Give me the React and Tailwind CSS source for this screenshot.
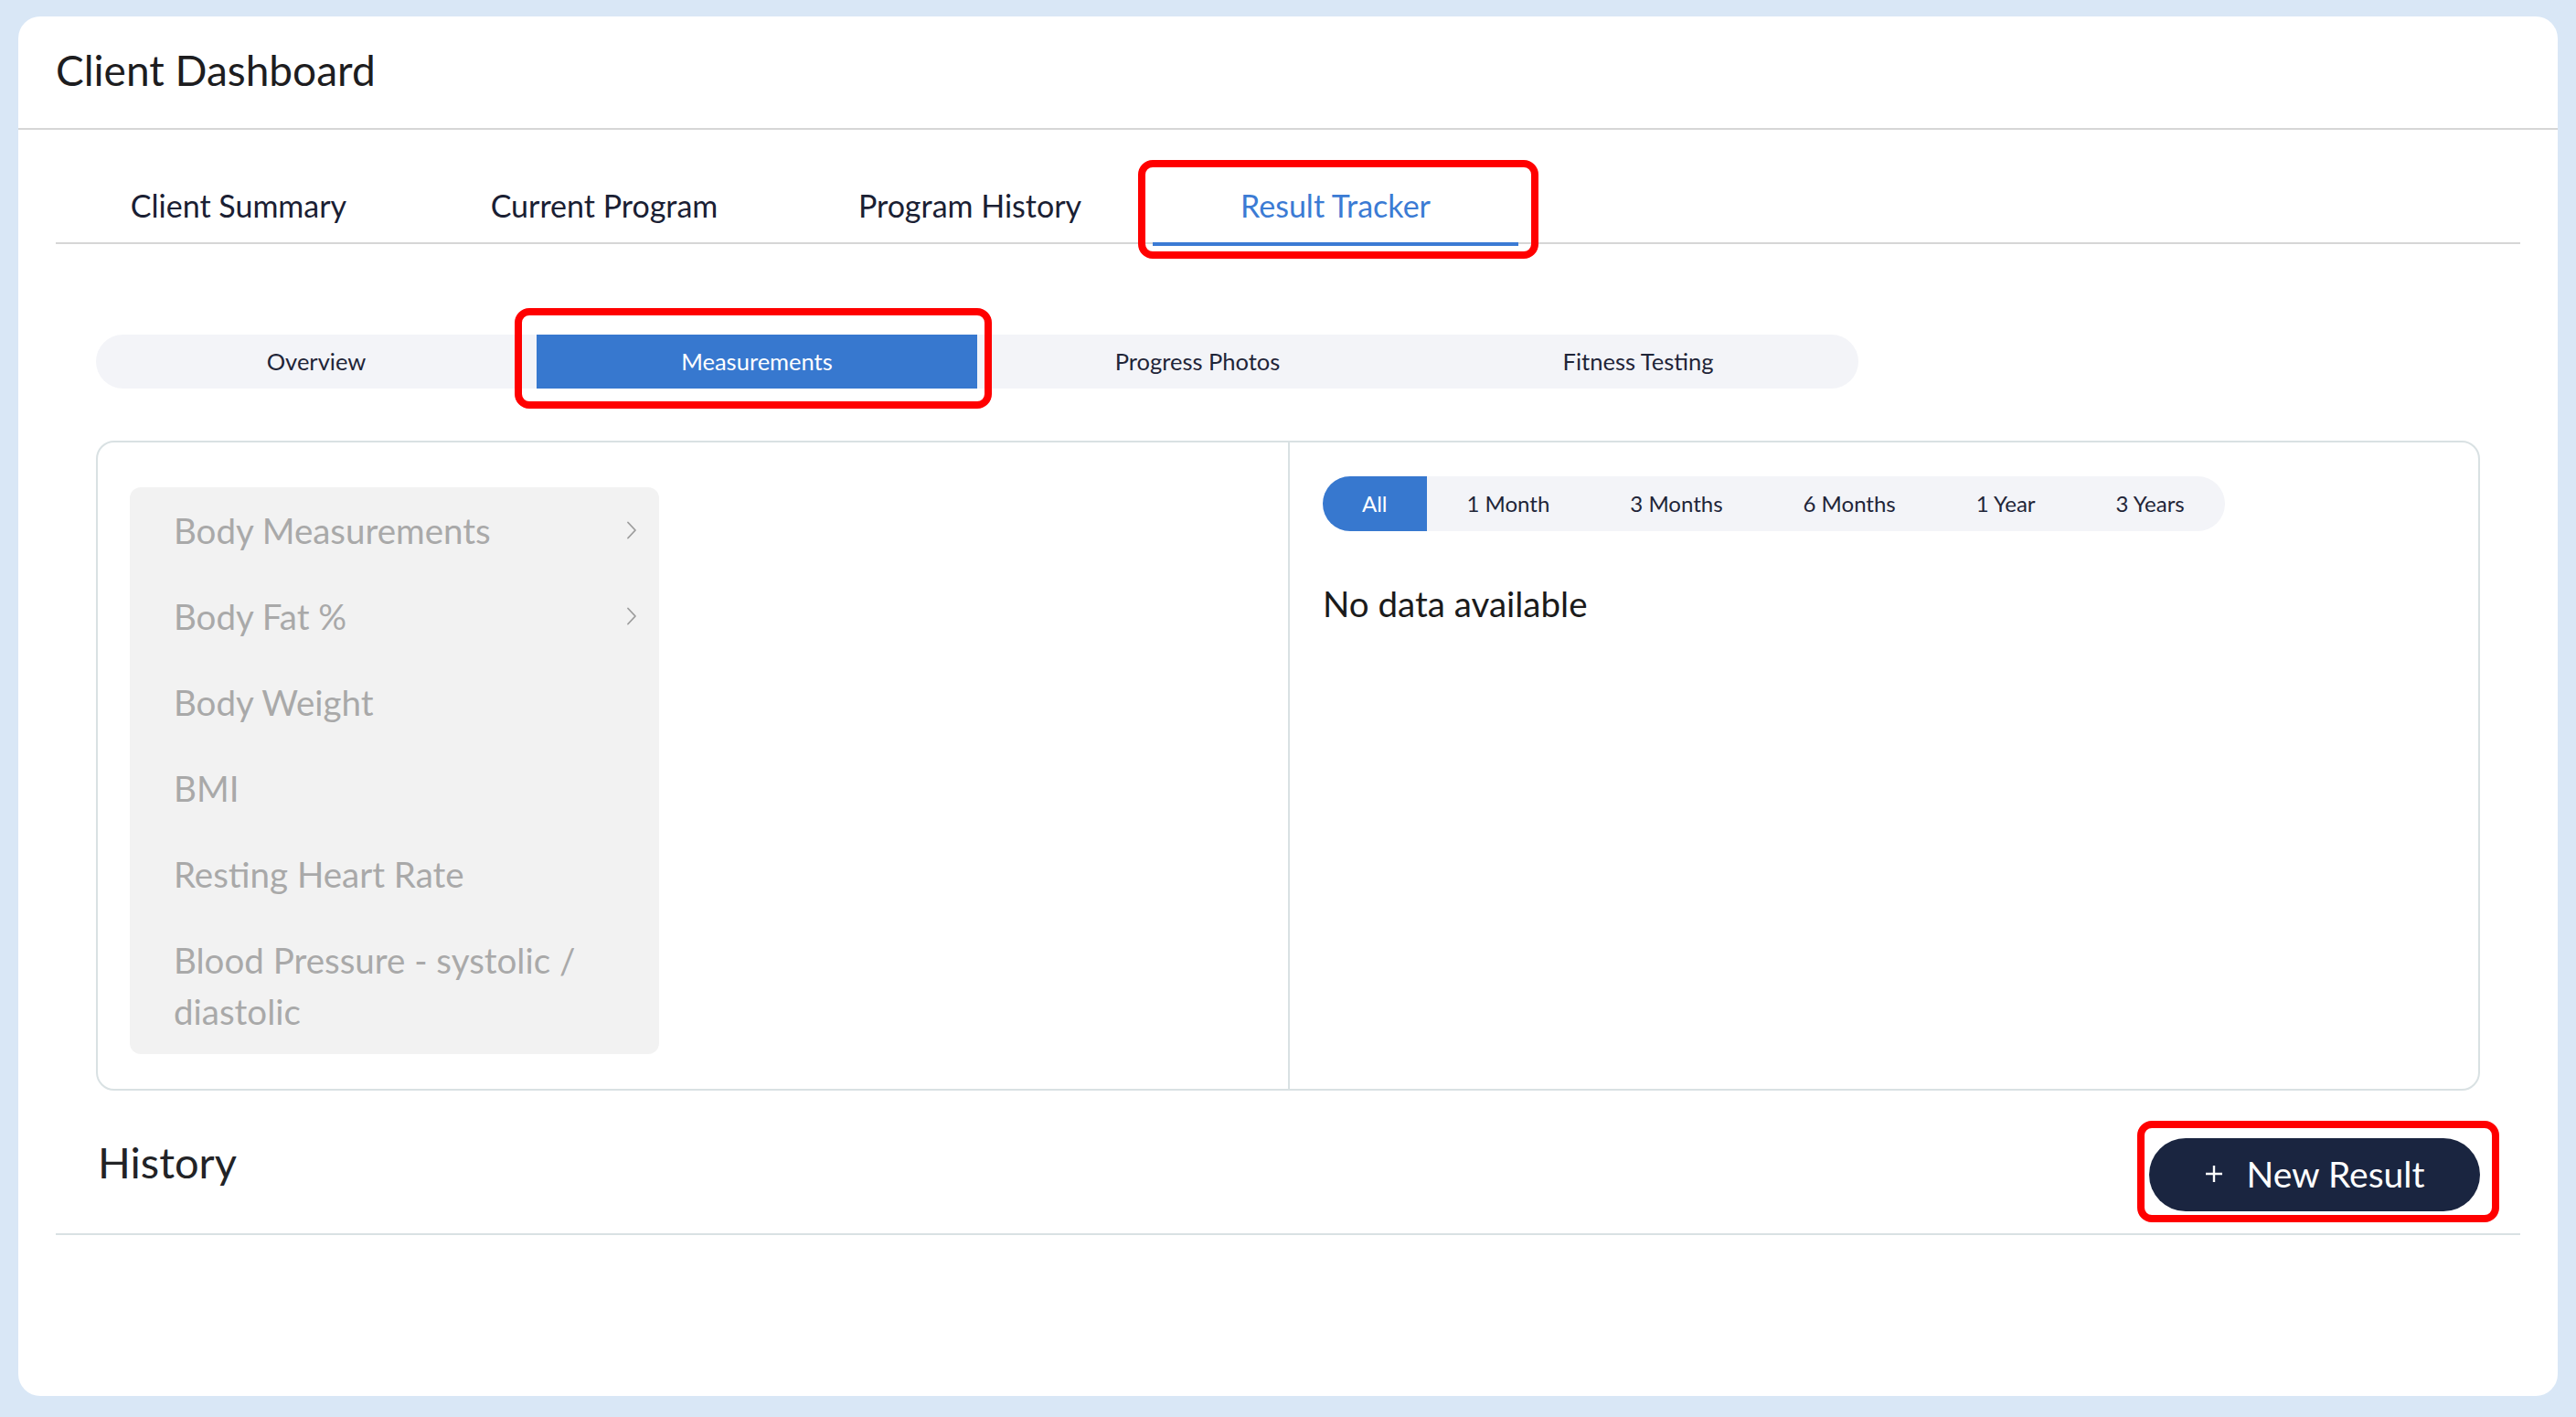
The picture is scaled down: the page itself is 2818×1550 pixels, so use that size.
import React from 'react';

const mainTabs = ['Client Summary', 'Current Program', 'Program History', 'Result Tracker'];
const subTabs = ['Overview', 'Measurements', 'Progress Photos', 'Fitness Testing'];
const ranges = ['All', '1 Month', '3 Months', '6 Months', '1 Year', '3 Years'];
const metrics = [
  { label: 'Body Measurements', nested: true },
  { label: 'Body Fat %', nested: true },
  { label: 'Body Weight' },
  { label: 'BMI' },
  { label: 'Resting Heart Rate' },
  { label: 'Blood Pressure - systolic / diastolic' },
];

// red callout frame drawn over a control
function Callout({ className }) {
  return (
    <span
      className={`pointer-events-none absolute rounded-[16px] border-[8px] border-[#ff0000] ${className}`}
    />
  );
}

function Chevron() {
  return (
    <svg width="12" height="20" viewBox="0 0 12 20" fill="none" className="shrink-0">
      <path d="M2 1.5l8 8.5-8 8.5" stroke="#9c9c9c" strokeWidth="1.8" strokeLinecap="round" strokeLinejoin="round" />
    </svg>
  );
}

function PlusIcon() {
  return (
    <svg width="20" height="20" viewBox="0 0 20 20" fill="none">
      <path d="M10 1v18M1 10h18" stroke="white" strokeWidth="2.4" />
    </svg>
  );
}

export default function App() {
  const activeTab = 'Result Tracker';
  const activeSub = 'Measurements';
  const activeRange = 'All';

  return (
    <div className="min-h-screen bg-[#d9e7f6] px-[20px] pt-[18px] pb-[23px] font-['Lato',sans-serif]">
      <div className="h-[1509px] rounded-[24px] bg-white">
        <header className="flex h-[124px] items-center border-b-2 border-[#d6d6d6] px-[41px] pb-[6px]">
          <h1 className="text-[46px] text-[#1d1d1f]">Client Dashboard</h1>
        </header>

        <div className="px-[41px]">
          <nav className="mt-[43px] flex border-b-2 border-[#d6d6d6]">
            {mainTabs.map((tab) => {
              const active = tab === activeTab;
              return (
                <button
                  key={tab}
                  className={
                    active
                      ? 'relative -mb-[4px] flex h-[84px] w-[400px] items-center justify-center border-b-4 border-[#3b7bd4] pb-[2px] text-[34px] text-[#3b7bd4]'
                      : 'relative -mb-[4px] flex h-[84px] w-[400px] items-center justify-center border-b-4 border-transparent pb-[2px] text-[34px] text-[#1a2033]'
                  }
                >
                  {tab}
                  {active && <Callout className="-left-[16px] -right-[22px] -top-[10px] -bottom-[18px]" />}
                </button>
              );
            })}
          </nav>

          <div className="px-[44px]">
            <div className="mt-[99px] flex h-[59px] w-[1928px] overflow-hidden rounded-full bg-[#f3f4f8]">
              {subTabs.map((tab) =>
                tab === activeSub ? (
                  <div key={tab} className="relative flex w-[482px] items-center justify-center bg-[#3778cf] text-[25.5px] text-white">
                    {tab}
                  </div>
                ) : (
                  <div key={tab} className="flex w-[482px] items-center justify-center text-[25.5px] text-[#1f2538]">
                    {tab}
                  </div>
                ),
              )}
            </div>
          </div>
        </div>

        <div className="relative px-[85px]">
          {/* callout around the active sub tab sits outside the clipped pill */}
          <Callout className="left-[543px] w-[522px] -top-[145px] h-[110px]" />

          <section className="mt-[57px] flex rounded-[20px] border-2 border-[#d9e1e3]">
            <div className="w-[1304px] border-r-2 border-[#d9e1e3] pt-[49px] pb-[38px] pl-[35px]">
              <ul className="w-[579px] rounded-[12px] bg-[#f2f2f2]">
                {metrics.map((m) => (
                  <li key={m.label} className="flex items-center gap-[12px] py-[19px] pr-[24px] pl-[48px]">
                    <span className="flex-1 text-[38.5px] leading-[56px] text-[#a9a9a9]">{m.label}</span>
                    {m.nested ? <Chevron /> : <span className="w-[12px]" />}
                  </li>
                ))}
              </ul>
            </div>

            <div className="flex-1 pt-[37px] pl-[36px]">
              <div className="inline-flex h-[60px] overflow-hidden rounded-full bg-[#f3f4f8]">
                {ranges.map((r) =>
                  r === activeRange ? (
                    <span key={r} className="flex items-center bg-[#3778cf] px-[43px] text-[24px] text-white">
                      {r}
                    </span>
                  ) : (
                    <span key={r} className="flex items-center px-[44px] text-[24px] text-[#1f2538]">
                      {r}
                    </span>
                  ),
                )}
              </div>
              <p className="mt-[58px] text-[38.5px] leading-[43px] text-[#1b1b1b]">No data available</p>
            </div>
          </section>
        </div>

        <div className="px-[41px]">
          <div className="mt-[52px] flex items-start justify-between border-b-2 border-[#d9e1e3] px-[44px] pb-[24px]">
            <h2 className="pl-[2px] text-[47px] leading-[52px] text-[#222326]">History</h2>
            <div className="relative">
              <button className="flex h-[80px] w-[362px] items-center justify-center gap-[26px] rounded-full bg-[#1a2540] pb-[2px] text-[39px] text-white">
                <PlusIcon />
                New Result
              </button>
              <Callout className="-left-[13px] -right-[21px] -top-[19px] -bottom-[12px]" />
            </div>
          </div>
        </div>
      </div>
    </div>
  );
}
